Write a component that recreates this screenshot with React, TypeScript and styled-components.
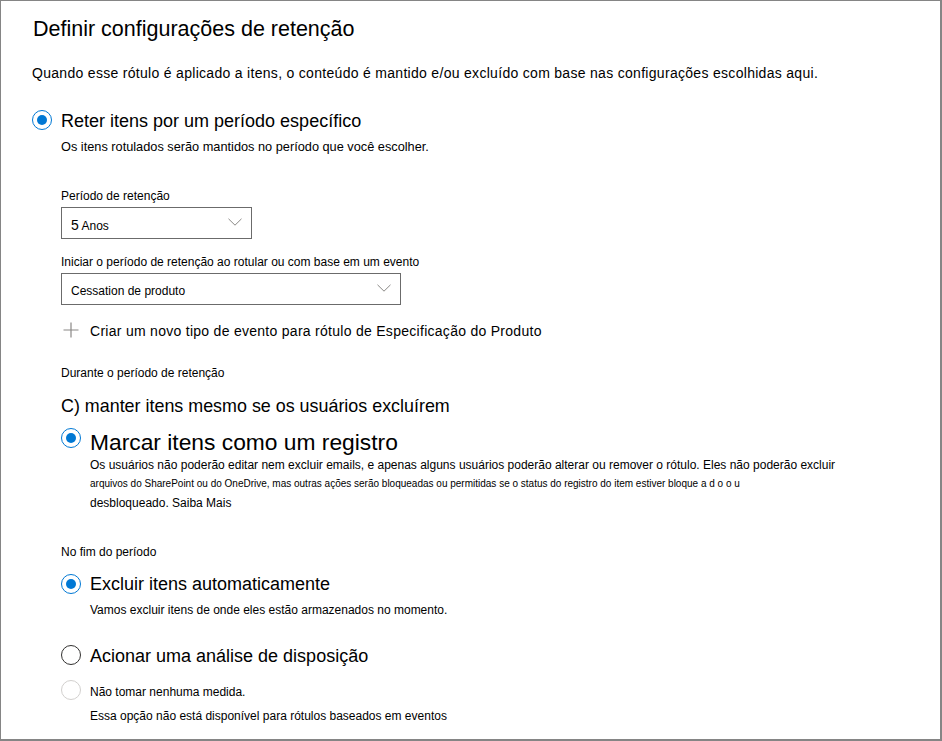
import React from "react";
import styled, { createGlobalStyle, css } from "styled-components";

const GlobalStyle = createGlobalStyle`
  html, body { margin: 0; padding: 0; background: #fff; }
  body { font-family: "Liberation Sans", Arial, sans-serif; color: #000; }
  * { box-sizing: border-box; }
`;

const Frame = styled.div`
  width: 942px;
  height: 741px;
  border-style: solid;
  border-color: #858585;
  border-width: 1px 2px 2px 1px;
  padding: 14px 0 0 31px;
  overflow: hidden;
  background: #fff;
`;

const Title = styled.h1`
  margin: 0 0 0 1px;
  font-size: 21.5px;
  line-height: 28px;
  font-weight: 400;
`;

const Intro = styled.p`
  margin: 20px 0 0 0;
  font-size: 14px;
  line-height: 20px;
  letter-spacing: 0.3px;
`;

const Small = styled.div<{ $mt?: number; $size?: number; $lh?: number; $indent?: number }>`
  margin-top: ${(p) => p.$mt ?? 0}px;
  margin-left: ${(p) => p.$indent ?? 0}px;
  font-size: ${(p) => p.$size ?? 12}px;
  line-height: ${(p) => p.$lh ?? 16}px;
  color: #000;
  white-space: nowrap;
`;

const Nested = styled.div`
  margin-left: 29px;
  display: flex;
  flex-direction: column;
  align-items: flex-start;
`;

const OptionRow = styled.div<{ $mt: number; $size: number; $lh: number; $radioTop: number }>`
  display: flex;
  align-items: flex-start;
  gap: 9px;
  margin-top: ${(p) => p.$mt}px;
  font-size: ${(p) => p.$size}px;
  line-height: ${(p) => p.$lh}px;
  & > span:first-child {
    margin-top: ${(p) => p.$radioTop}px;
  }
`;

type RadioState = "checked" | "unchecked" | "disabled";

const Radio = styled.span<{ $state: RadioState }>`
  position: relative;
  flex: none;
  width: 20px;
  height: 20px;
  border-radius: 50%;
  border: 1px solid
    ${(p) => (p.$state === "checked" ? "#0078d4" : p.$state === "disabled" ? "#d2d0ce" : "#323130")};
  ${(p) =>
    p.$state === "checked" &&
    css`
      &::after {
        content: "";
        position: absolute;
        left: 4px;
        top: 4px;
        width: 10px;
        height: 10px;
        border-radius: 50%;
        background: #0078d4;
      }
    `}
`;

const RowLabel = styled.span<{ $pt?: number }>`
  padding-top: ${(p) => p.$pt ?? 0}px;
  white-space: nowrap;
`;

const Dropdown = styled.div<{ $width: number; $mt: number }>`
  width: ${(p) => p.$width}px;
  height: 32px;
  margin-top: ${(p) => p.$mt}px;
  border: 1px solid #6b6b6b;
  padding: 0 9px 0 9px;
  display: flex;
  align-items: center;
  justify-content: space-between;
  font-size: 12px;
  background: #fff;
`;

const DropValue = styled.span`
  padding-top: 3px;
  white-space: nowrap;
`;

const Big = styled.span`
  font-size: 14px;
`;

const Chevron = () => (
  <svg width="14" height="8" viewBox="0 0 14 8" style={{ marginTop: -3 }}>
    <path d="M0.5 0.8 L7 7.2 L13.5 0.8" fill="none" stroke="#8a8886" strokeWidth="1" />
  </svg>
);

const AddRow = styled.div`
  display: flex;
  align-items: flex-start;
  gap: 9px;
  margin-top: 16px;
  font-size: 14px;
  line-height: 20px;
  letter-spacing: 0.28px;
  white-space: nowrap;
`;

const PlusBox = styled.span`
  width: 20px;
  height: 20px;
  display: flex;
  align-items: center;
  justify-content: center;
  margin-top: -1px;
`;

const Plus = () => (
  <svg width="16" height="16" viewBox="0 0 16 16">
    <path d="M8 0.5 V15.5 M0.5 8 H15.5" stroke="#8a8886" strokeWidth="1.2" fill="none" />
  </svg>
);

const Heading = styled.div`
  margin-top: 14px;
  font-size: 17.9px;
  line-height: 22px;
  white-space: nowrap;
`;

const Desc = styled.div`
  margin-left: 29px;
  display: flex;
  flex-direction: column;
`;

export default function App() {
  return (
    <>
      <GlobalStyle />
      <Frame>
        <Title>Definir configurações de retenção</Title>
        <Intro>
          Quando esse rótulo é aplicado a itens, o conteúdo é mantido e/ou excluído com base nas configurações escolhidas aqui.
        </Intro>

        <OptionRow $mt={26} $size={18} $lh={24} $radioTop={1}>
          <Radio $state="checked" />
          <RowLabel>Reter itens por um período específico</RowLabel>
        </OptionRow>
        <Small $mt={6} $indent={29} $size={12.75}>
          Os itens rotulados serão mantidos no período que você escolher.
        </Small>

        <Nested>
          <Small $mt={33}>Período de retenção</Small>
          <Dropdown $width={191} $mt={3}>
            <DropValue>
              <Big>5</Big> Anos
            </DropValue>
            <Chevron />
          </Dropdown>

          <Small $mt={15}>Iniciar o período de retenção ao rotular ou com base em um evento</Small>
          <Dropdown $width={340} $mt={3}>
            <DropValue>Cessation de produto</DropValue>
            <Chevron />
          </Dropdown>

          <AddRow>
            <PlusBox>
              <Plus />
            </PlusBox>
            <span>Criar um novo tipo de evento para rótulo de Especificação do Produto</span>
          </AddRow>

          <Small $mt={24}>Durante o período de retenção</Small>
          <Heading>C) manter itens mesmo se os usuários excluírem</Heading>

          <OptionRow $mt={10} $size={22.8} $lh={30} $radioTop={1}>
            <Radio $state="checked" />
            <RowLabel>Marcar itens como um registro</RowLabel>
          </OptionRow>
          <Desc>
            <Small>
              Os usuários não poderão editar nem excluir emails, e apenas alguns usuários poderão alterar ou remover o rótulo. Eles não poderão excluir
            </Small>
            <Small $size={10} $mt={3}>
              arquivos do SharePoint ou do OneDrive, mas outras ações serão bloqueadas ou permitidas se o status do registro do item estiver bloque a d o o u
            </Small>
            <Small $size={12} $mt={3}>
              desbloqueado. Saiba Mais
            </Small>
          </Desc>

          <Small $mt={33}>No fim do período</Small>
          <OptionRow $mt={12} $size={18} $lh={24} $radioTop={2}>
            <Radio $state="checked" />
            <RowLabel>Excluir itens automaticamente</RowLabel>
          </OptionRow>
          <Small $mt={6} $indent={29}>
            Vamos excluir itens de onde eles estão armazenados no momento.
          </Small>

          <OptionRow $mt={26} $size={18} $lh={24} $radioTop={1}>
            <Radio $state="unchecked" />
            <RowLabel>Acionar uma análise de disposição</RowLabel>
          </OptionRow>

          <OptionRow $mt={12} $size={12} $lh={16} $radioTop={0}>
            <Radio $state="disabled" />
            <RowLabel $pt={4}>Não tomar nenhuma medida.</RowLabel>
          </OptionRow>
          <Small $mt={8} $indent={29}>
            Essa opção não está disponível para rótulos baseados em eventos
          </Small>
        </Nested>
      </Frame>
    </>
  );
}
